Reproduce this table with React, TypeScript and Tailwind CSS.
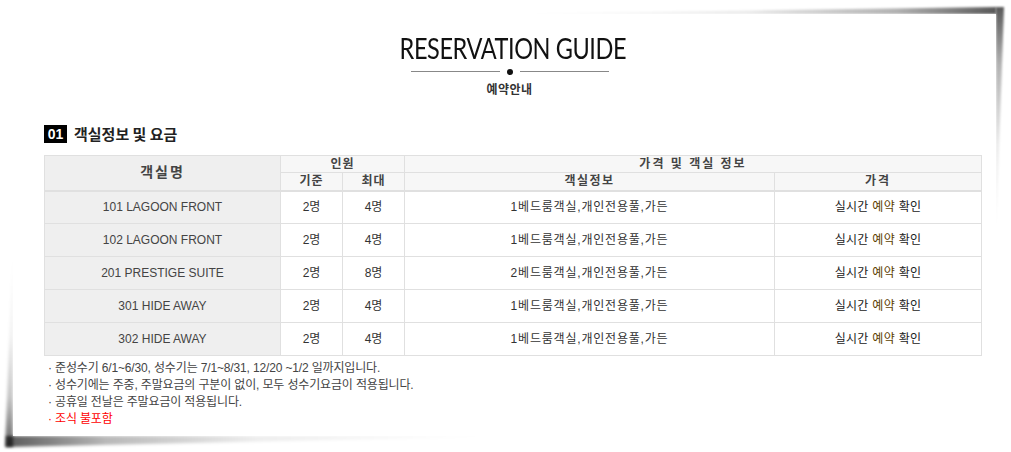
import React from "react";

const rows = [
  { name: "101 LAGOON FRONT", base: "2명", max: "4명", info: "1베드룸객실,개인전용풀,가든" },
  { name: "102 LAGOON FRONT", base: "2명", max: "4명", info: "1베드룸객실,개인전용풀,가든" },
  { name: "201 PRESTIGE SUITE", base: "2명", max: "8명", info: "2베드룸객실,개인전용풀,가든" },
  { name: "301 HIDE AWAY", base: "2명", max: "4명", info: "1베드룸객실,개인전용풀,가든" },
  { name: "302 HIDE AWAY", base: "2명", max: "4명", info: "1베드룸객실,개인전용풀,가든" },
];

const notes = [
  "준성수기 6/1~6/30, 성수기는 7/1~8/31, 12/20 ~1/2 일까지입니다.",
  "성수기에는 주중, 주말요금의 구분이 없이, 모두 성수기요금이 적용됩니다.",
  "공휴일 전날은 주말요금이 적용됩니다.",
];

export default function App() {
  return (
    <div className="w-[1011px] h-[452px] bg-white pt-[14px] pl-[13px] font-['Liberation_Sans','Noto_Sans_CJK_KR',sans-serif]">
      <div className="relative w-[983px] h-[422px]">
        {/* paper curl shadows */}
        <div className="absolute right-0 top-[-7px] w-[500px] h-[7px] blur-[1.2px]">
          <div className="w-full h-full [clip-path:polygon(0_100%,100%_0,100%_100%)] bg-[linear-gradient(to_left,rgba(0,0,0,0.65),rgba(0,0,0,0.3)_20%,rgba(0,0,0,0.08)_50%,rgba(0,0,0,0))]" />
        </div>
        <div className="absolute right-[-8px] top-[-7px] w-[8px] h-[230px] blur-[1.2px]">
          <div className="w-full h-full [clip-path:polygon(0_0,100%_0,0_100%)] bg-[linear-gradient(to_bottom,rgba(0,0,0,0.65),rgba(0,0,0,0.3)_25%,rgba(0,0,0,0.08)_60%,rgba(0,0,0,0))]" />
        </div>
        <div className="absolute left-[-7px] bottom-[-11px] w-[500px] h-[11px] blur-[1.5px]">
          <div className="w-full h-full [clip-path:polygon(0_0,100%_0,0_100%)] bg-[linear-gradient(to_right,rgba(0,0,0,0.65),rgba(0,0,0,0.28)_20%,rgba(0,0,0,0.07)_50%,rgba(0,0,0,0))]" />
        </div>
        <div className="absolute left-[-8px] bottom-[-11px] w-[8px] h-[200px] blur-[1.5px]">
          <div className="w-full h-full [clip-path:polygon(100%_0,100%_100%,0_100%)] bg-[linear-gradient(to_top,rgba(0,0,0,0.6),rgba(0,0,0,0.22)_25%,rgba(0,0,0,0.06)_55%,rgba(0,0,0,0))]" />
        </div>

        <div className="relative w-full h-full bg-white pt-[20px] pl-[31px] pr-[15px]">
          {/* title */}
          <div className="flex flex-col items-center">
            <div className="h-[28px] leading-[28px] text-[28px] text-[#111] font-['Lato',sans-serif] tracking-[-0.5px] scale-x-[0.84] whitespace-nowrap">
              RESERVATION GUIDE
            </div>
            <div className="mt-[6px] mr-[5px] h-[7px] flex items-center gap-[7px]">
              <div className="w-[89px] h-px bg-[#888]" />
              <div className="w-[6px] h-[6px] rounded-full bg-[#111]" />
              <div className="w-[89px] h-px bg-[#888]" />
            </div>
            <div className="mt-[6px] mr-[6px] h-[16px] leading-[16px] text-[12px] font-bold text-[#333] tracking-[0.5px] font-['Noto_Sans_CJK_KR',sans-serif]">
              예약안내
            </div>
          </div>

          {/* section title */}
          <div className="mt-[28px] flex items-center h-[18px]">
            <div className="w-[23px] h-[18px] bg-black text-white text-[14px] font-bold leading-[18px] flex items-center justify-center">
              01
            </div>
            <div className="ml-[7px] text-[15px] font-bold text-[#222] leading-[18px] font-['Noto_Sans_CJK_KR',sans-serif]">
              객실정보 및 요금
            </div>
          </div>

          {/* table */}
          <table className="mt-[12px] w-[937px] border-collapse table-fixed text-[12px] text-[#333]">
            <colgroup>
              <col className="w-[236px]" />
              <col className="w-[62px]" />
              <col className="w-[62px]" />
              <col className="w-[370px]" />
              <col className="w-[207px]" />
            </colgroup>
            <thead>
              <tr className="h-[17px]">
                <th rowSpan={2} className="border border-[#e0e0e0] border-b-2 bg-[#efefef] text-[14px] font-bold text-[#444] p-0 tracking-[2px]">
                  객실명
                </th>
                <th colSpan={2} className="border border-[#e0e0e0] bg-[#f7f7f7] font-bold text-[#444] p-0 leading-[16px] tracking-[1px]">
                  인원
                </th>
                <th colSpan={2} className="border border-[#e0e0e0] bg-[#f7f7f7] font-bold text-[#444] p-0 leading-[16px] tracking-[2px]">
                  가격 및 객실 정보
                </th>
              </tr>
              <tr className="h-[18px]">
                <th className="border border-[#e0e0e0] border-b-2 bg-[#f7f7f7] font-bold text-[#444] p-0 leading-[16px] tracking-[1px]">기준</th>
                <th className="border border-[#e0e0e0] border-b-2 bg-[#f7f7f7] font-bold text-[#444] p-0 leading-[16px] tracking-[1px]">최대</th>
                <th className="border border-[#e0e0e0] border-b-2 bg-[#f7f7f7] font-bold text-[#444] p-0 leading-[16px] tracking-[1.5px]">객실정보</th>
                <th className="border border-[#e0e0e0] border-b-2 bg-[#f7f7f7] font-bold text-[#444] p-0 leading-[16px] tracking-[2px]">가격</th>
              </tr>
            </thead>
            <tbody>
              {rows.map((r) => (
                <tr key={r.name} className="h-[33px]">
                  <td className="border border-[#e0e0e0] bg-[#efefef] text-center p-0 text-[#444]">{r.name}</td>
                  <td className="border border-[#e0e0e0] text-center p-0">{r.base}</td>
                  <td className="border border-[#e0e0e0] text-center p-0">{r.max}</td>
                  <td className="border border-[#e0e0e0] text-center p-0 tracking-[0.8px]">{r.info}</td>
                  <td className="border border-[#e0e0e0] text-center p-0 text-[#222] tracking-[0.3px]">
                    실시간 <span className="text-[#5c4000]">예약</span> 확인
                  </td>
                </tr>
              ))}
            </tbody>
          </table>

          {/* notes */}
          <ul className="mt-[4px] pl-[4px] text-[12px] leading-[17px] text-[#444] tracking-[-0.15px]">
            {notes.map((n) => (
              <li key={n} className="flex">
                <span className="w-[7px]">·</span>
                <span>{n}</span>
              </li>
            ))}
            <li className="flex text-[#ff0000]">
              <span className="w-[7px]">·</span>
              <span>조식 불포함</span>
            </li>
          </ul>
        </div>
      </div>
    </div>
  );
}
